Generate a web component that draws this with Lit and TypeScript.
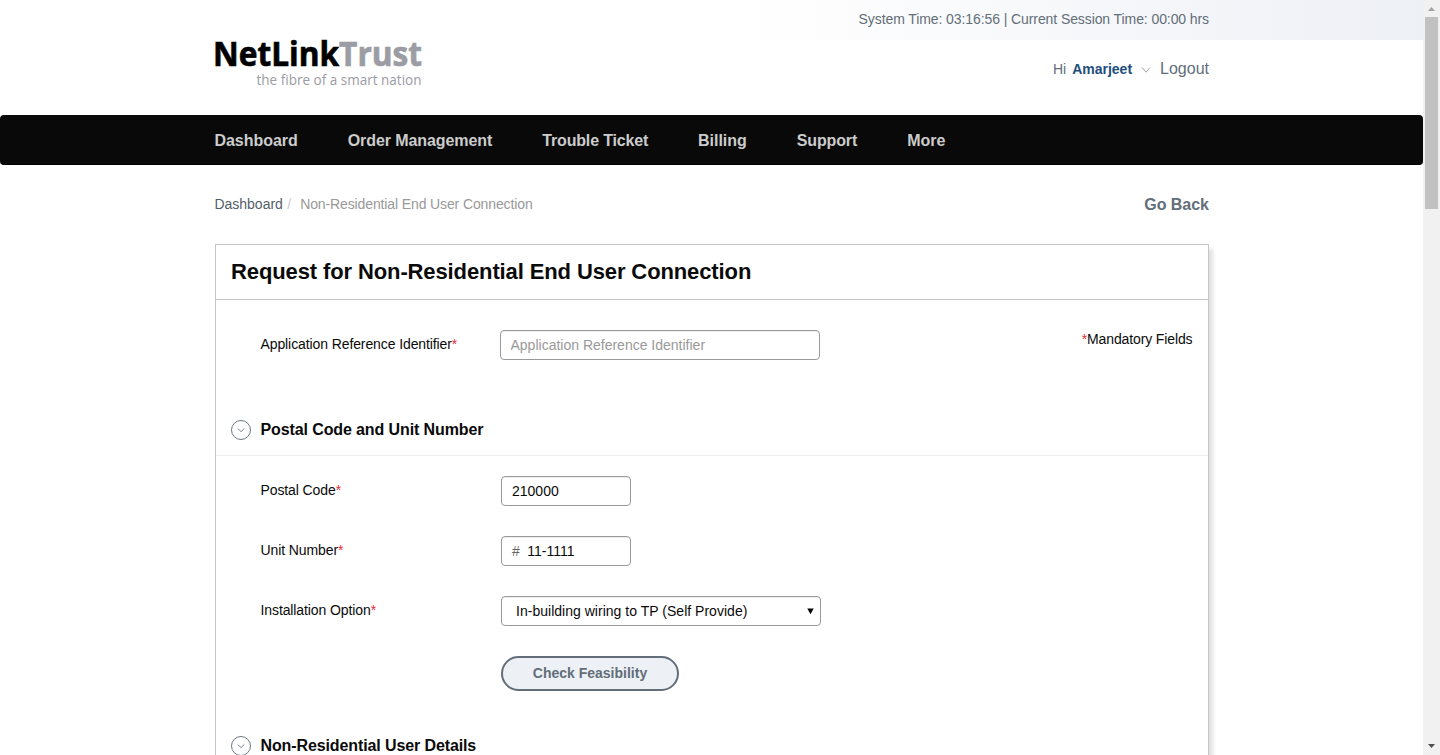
import { LitElement, html, css } from "lit";
import { customElement, property } from "lit/decorators.js";

@customElement("section-title")
class SectionTitle extends LitElement {
  @property() label = "";
  static styles = css`
    :host { display: flex; align-items: center; gap: 8.5px; height: 22px; }
    svg { display: block; flex: none; }
    h2 { margin: 0; font: bold 16px/20px "Liberation Sans", Arial, sans-serif; letter-spacing: -.11px; color: #0a0a0a; white-space: nowrap; }
  `;
  render() {
    return html`<svg width="22" height="22" viewBox="0 0 22 22" fill="none" stroke="#6b7883">
        <circle cx="11" cy="11" r="9.5"></circle>
        <path d="M7.7 9.5L11 12.6L14.3 9.5" stroke-width=".9"></path>
      </svg>
      <h2>${this.label}</h2>`;
  }
}

@customElement("form-row")
class FormRow extends LitElement {
  @property() label = "";
  static styles = css`
    :host { display: flex; height: 30px; padding-left: 44.5px; }
    .label { width: 240.5px; flex: none; font: 14px/28px "Liberation Sans", Arial, sans-serif; letter-spacing: -.1px; color: #0a0a0a; white-space: nowrap; }
    .star { color: #e8273a; }
  `;
  render() {
    return html`<div class="label">${this.label}${this.label ? html`<span class="star">*</span>` : ""}</div><slot></slot>`;
  }
}

@customElement("app-root")
class AppRoot extends LitElement {
  static styles = css`
    :host {
      display: flex; height: 755px; overflow: hidden; background: #fff;
      font: 14px/20px "Liberation Sans", Arial, sans-serif; color: #0a0a0a;
    }
    * { box-sizing: border-box; }
    a { color: inherit; text-decoration: none; }
    .page { width: 1423px; flex: none; height: 755px; overflow: hidden; }
    .wrap { width: 995px; margin-left: 214px; }
    .topbar {
      height: 40px; padding-top: 9px; text-align: right; color: #626e79; letter-spacing: -.09px;
      background: linear-gradient(90deg, #fff 740px, #f4f5f9 1200px, #edf0f5 1423px);
    }
    .head { display: flex; justify-content: space-between; height: 75px; }
    .logo { display: block; overflow: visible; margin-top: -14px; }
    .user { display: flex; height: 20px; margin-top: 19px; color: #626e79; }
    .name { color: #1d4d7c; font-weight: bold; margin-left: 6px; }
    .user svg { margin: 8px 5px 0 9px; }
    .logout { font-size: 16px; line-height: 20px; margin-left: 4px; }
    nav { height: 50px; background: #090909; border-radius: 4px; border-bottom: 1px solid #000; }
    .menu { display: flex; padding-left: .5px; font: bold 16px/51px "Liberation Sans", Arial, sans-serif; color: #ccc; gap: 50px; white-space: nowrap; letter-spacing: -.04px; }
    .menu a:nth-child(2) { letter-spacing: -.08px; }
    .menu a:nth-child(3) { letter-spacing: -.17px; }
    .menu a:nth-child(5) { letter-spacing: -.12px; }
    .crumbs { display: flex; height: 79px; padding: 29px 0 0 .5px; color: #999; letter-spacing: -.02px; }
    .home { color: #535e69; }
    .sep { color: #ccc; padding: 0 9px 0 4.5px; }
    .current { letter-spacing: -.12px; }
    .back { margin-left: auto; font-size: 16px; line-height: 21px; font-weight: bold; color: #626e79; }
    .card {
      width: 994px; height: 600px; margin-left: 1px;
      border: 1px solid #c4c5c9; box-shadow: 4px 5px 4px rgba(0, 0, 0, .12);
    }
    h1 { margin: 0; height: 55px; padding-left: 15px; border-bottom: 1px solid #c4c5c9; font-size: 22px; line-height: 53px; letter-spacing: -.115px; white-space: nowrap; }
    .first { display: flex; padding-top: 30px; height: 119px; }
    .mandatory { margin-left: auto; margin-right: 15.5px; line-height: 18px; letter-spacing: -.12px; }
    .star { color: #e8273a; }
    .section { padding-left: 14px; height: 37px; border-bottom: 1px solid #edeff3; }
    .section.last { border: 0; }
    .rows { display: flex; flex-direction: column; gap: 30px; padding-top: 20px; height: 279px; }
    input, .unit, .select {
      height: 30px; border: 1px solid #999; border-radius: 4px; background: #fff;
      box-shadow: inset 0 1px 1px rgba(0, 0, 0, .075); font: 14px/28px "Liberation Sans", Arial, sans-serif; color: #0a0a0a;
    }
    input { margin: 0; padding: 0 10px; width: 130px; outline: 0; }
    input::placeholder { color: #999; opacity: 1; }
    .ref { width: 320px; margin-left: -1px; padding-left: 9.5px; }
    .unit { width: 130px; padding-left: 10px; display: flex; gap: 7.5px; }
    .hash { color: #666; }
    .select { width: 320px; padding: 0 6px 0 14px; display: flex; justify-content: space-between; align-items: center; letter-spacing: .02px; }
    button {
      width: 178px; height: 35px; padding: 0 0 1px; border: 2px solid #626e79; border-radius: 18px;
      background: #edf0f5; color: #626e79; font: bold 14px/30px "Liberation Sans", Arial, sans-serif;
    }
    .scroll { width: 17px; background: #f1f1f1; display: flex; flex-direction: column; }
    .up, .down { display: block; height: 17px; width: 17px; flex: none; }
    .thumb { width: 13px; margin-left: 2px; height: 192px; background: #c1c1c1; }
    .down { margin-top: auto; }
  `;
  render() {
    const items = ["Dashboard", "Order Management", "Trouble Ticket", "Billing", "Support", "More"];
    return html`
      <div class="page">
        <div class="topbar"><div class="wrap">System Time: 03:16:56 | Current Session Time: 00:00 hrs</div></div>
        <div class="wrap head">
          <svg class="logo" width="212" height="66" viewBox="0 0 212 66" font-family="Open Sans, sans-serif">
            <text x="-1" y="40" font-size="34.5" font-weight="700" textLength="209" lengthAdjust="spacingAndGlyphs" fill="#000" stroke="#000" stroke-width=".7">NetLink<tspan fill="#9b9ca4" stroke="#9b9ca4">Trust</tspan></text>
            <text x="42.5" y="58.5" font-size="14.5" textLength="165" lengthAdjust="spacingAndGlyphs" fill="#9b9ca4">the fibre of a smart nation</text>
          </svg>
          <div class="user">
            <span>Hi</span><a class="name">Amarjeet</a>
            <svg width="10" height="7" viewBox="0 0 10 7" fill="none" stroke="#a2a8ae"><path d="M1 .5L5 5.2L9 .5"></path></svg>
            <a class="logout">Logout</a>
          </div>
        </div>
        <nav><div class="wrap menu">${items.map((i) => html`<a>${i}</a>`)}</div></nav>
        <div class="wrap crumbs">
          <a class="home">Dashboard</a><span class="sep">/</span><span class="current">Non-Residential End User Connection</span>
          <a class="back">Go Back</a>
        </div>
        <div class="wrap"><div class="card">
          <h1>Request for Non-Residential End User Connection</h1>
          <div class="first">
            <form-row label="Application Reference Identifier"><input class="ref" placeholder="Application Reference Identifier" /></form-row>
            <div class="mandatory"><span class="star">*</span>Mandatory Fields</div>
          </div>
          <div class="section"><section-title label="Postal Code and Unit Number"></section-title></div>
          <div class="rows">
            <form-row label="Postal Code"><input .value=${"210000"} /></form-row>
            <form-row label="Unit Number"><div class="unit"><span class="hash">#</span><span>11-1111</span></div></form-row>
            <form-row label="Installation Option"><div class="select"><span>In-building wiring to TP (Self Provide)</span>
              <svg width="7" height="7" viewBox="0 0 7 7"><path d="M.3 .5H6.7L3.5 6.3Z" fill="#000"></path></svg></div></form-row>
            <form-row><button>Check Feasibility</button></form-row>
          </div>
          <div class="section last"><section-title label="Non-Residential User Details"></section-title></div>
        </div></div>
      </div>
      <div class="scroll">
        <svg class="up" viewBox="0 0 17 17"><path d="M5 11L8.5 7L12 11Z" fill="#a3a3a3"></path></svg>
        <div class="thumb"></div>
        <svg class="down" viewBox="0 0 17 17"><path d="M5 6L8.5 10L12 6Z" fill="#505050"></path></svg>
      </div>`;
  }
}
